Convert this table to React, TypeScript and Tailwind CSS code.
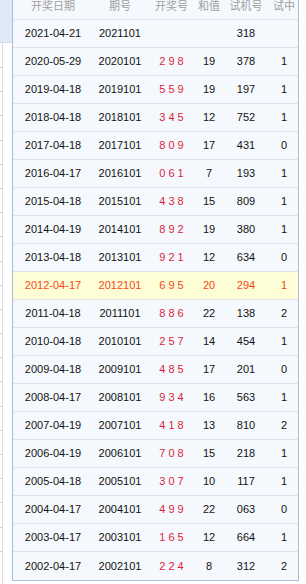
import React from "react";

type Row = [string, string, string, string, string, string];

const rows: Row[] = [
  ["2021-04-21", "2021101", "", "", "318", ""],
  ["2020-05-29", "2020101", "2 9 8", "19", "378", "1"],
  ["2019-04-18", "2019101", "5 5 9", "19", "197", "1"],
  ["2018-04-18", "2018101", "3 4 5", "12", "752", "1"],
  ["2017-04-18", "2017101", "8 0 9", "17", "431", "0"],
  ["2016-04-17", "2016101", "0 6 1", "7", "193", "1"],
  ["2015-04-18", "2015101", "4 3 8", "15", "809", "1"],
  ["2014-04-19", "2014101", "8 9 2", "19", "380", "1"],
  ["2013-04-18", "2013101", "9 2 1", "12", "634", "0"],
  ["2012-04-17", "2012101", "6 9 5", "20", "294", "1"],
  ["2011-04-18", "2011101", "8 8 6", "22", "138", "2"],
  ["2010-04-18", "2010101", "2 5 7", "14", "454", "1"],
  ["2009-04-18", "2009101", "4 8 5", "17", "201", "0"],
  ["2008-04-17", "2008101", "9 3 4", "16", "563", "1"],
  ["2007-04-19", "2007101", "4 1 8", "13", "810", "2"],
  ["2006-04-19", "2006101", "7 0 8", "15", "218", "1"],
  ["2005-04-18", "2005101", "3 0 7", "10", "117", "1"],
  ["2004-04-17", "2004101", "4 9 9", "22", "063", "0"],
  ["2003-04-17", "2003101", "1 6 5", "12", "664", "1"],
  ["2002-04-17", "2002101", "2 2 4", "8", "312", "2"],
];

const widths = ["w-[80px]", "w-[54px]", "w-[49px]", "w-[26px]", "w-[48px]", "w-[28px]"];

export default function App() {
  return (
    <div
      className="w-[306px] h-[584px] overflow-hidden bg-white flex"
      style={{ fontFamily: '"Liberation Sans", Arial, "Noto Sans CJK SC", sans-serif' }}
    >
      {/* left strip */}
      <div className="w-[12px] shrink-0 flex flex-col">
        <div className="h-[43px] bg-[#dfe9f6] border-b border-[#d3dce6]"></div>
        <div className="flex-1 border-r-0 relative">
          <div className="absolute left-[2px] top-0 bottom-0 w-px bg-[#dcdcdc]"></div>
          <div className="flex flex-col pt-[24px]">
            {Array.from({ length: 21 }).map((_, i) => (
              <div key={i} className="h-[24.2px] flex items-start">
                <div className="w-[3px] h-px bg-[#d0d0d0]"></div>
              </div>
            ))}
          </div>
        </div>
      </div>
      {/* table */}
      <div className="w-[287px] shrink-0 -mt-[8px] self-start border border-[#a9bfd8] border-t-0 bg-[#f5f9fe] text-[11px]">
        <div className="flex h-[28px] items-center border-b border-[#dde3ea] text-[#a0a0a0]" style={{ fontFamily: '"Noto Sans CJK SC", sans-serif' }}>
          {["开奖日期", "期号", "开奖号", "和值", "试机号", "试中"].map((h, i) => (
            <div key={i} className={`${widths[i]} text-center whitespace-nowrap`}>{h}</div>
          ))}
        </div>
        {rows.map((r, ri) => {
          const hl = r[0] === "2012-04-17";
          return (
            <div
              key={ri}
              className={`flex h-[28px] items-center ${ri < rows.length - 1 ? "border-b border-[#dde3ea]" : ""} ${hl ? "bg-[#fefed6] text-[#f5461c]" : "text-[#111111]"}`}
            >
              {r.map((c, ci) => (
                <div
                  key={ci}
                  className={`${widths[ci]} text-center whitespace-pre ${ci === 2 && !hl ? "text-[#dc1f3c]" : ""}`}
                >
                  {c}
                </div>
              ))}
            </div>
          );
        })}
      </div>
      <div className="flex-1 bg-white"></div>
    </div>
  );
}
